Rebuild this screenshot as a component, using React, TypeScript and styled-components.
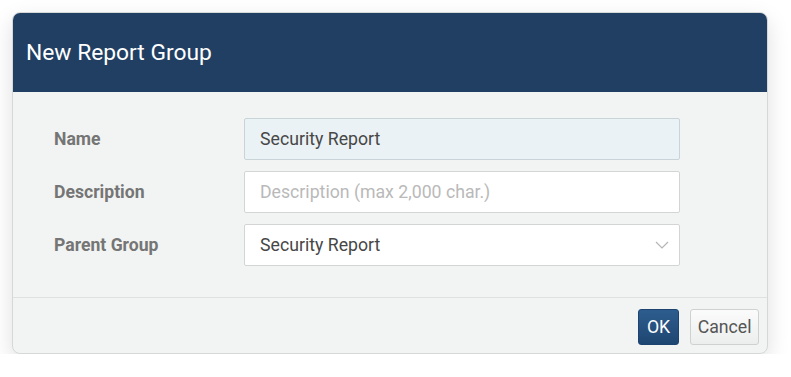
import React from 'react';
import styled, { createGlobalStyle } from 'styled-components';

const GlobalStyle = createGlobalStyle`
  html, body {
    margin: 0;
    padding: 0;
    background: #ffffff;
    font-family: Roboto, "Liberation Sans", Arial, sans-serif;
  }
`;

const Page = styled.div`
  padding: 12px 23px 0 12px;
`;

const Dialog = styled.div`
  width: 756px;
  border-radius: 8px;
  overflow: hidden;
  background: #f2f4f3;
  border: 1px solid #d6d8d8;
  box-sizing: border-box;
  box-shadow: 0 8px 22px rgba(0, 0, 0, 0.13);
`;

const Header = styled.div`
  height: 80px;
  background: #213f63;
  display: flex;
  align-items: center;
  padding: 0 14px;
  margin: -1px -1px 0;
`;

const Title = styled.h2`
  margin: 0;
  font-size: 22.8px;
  font-weight: 400;
  color: #ffffff;
`;

const Body = styled.div`
  padding: 26px 0 31px 41px;
  display: flex;
  flex-direction: column;
  gap: 11px;
  border-bottom: 1px solid #dfe1e1;
`;

const Row = styled.div`
  display: flex;
  align-items: center;
`;

const Label = styled.label`
  width: 190px;
  font-size: 17.6px;
  font-weight: 700;
  color: #757575;
`;

const Field = styled.div<{ $tinted?: boolean }>`
  width: 436px;
  height: 42px;
  box-sizing: border-box;
  border: 1px solid ${(p) => (p.$tinted ? '#c9d4d8' : '#d3d5d5')};
  border-radius: 2px;
  background: ${(p) => (p.$tinted ? '#eaf2f5' : '#ffffff')};
  display: flex;
  align-items: center;
  justify-content: space-between;
  padding: 0 10px 0 15px;
  font-size: 17.7px;
  color: #474747;
`;

const Placeholder = styled.span`
  color: #b9b9b9;
`;

const Chevron = styled.svg`
  width: 14px;
  height: 8px;
`;

const Footer = styled.div`
  display: flex;
  justify-content: flex-end;
  gap: 11px;
  padding: 11px 8px 8px 0;
`;

const Button = styled.button<{ $primary?: boolean }>`
  height: 36px;
  box-sizing: border-box;
  border-radius: 3px;
  font-family: inherit;
  font-size: 17.7px;
  padding: 0 ${(p) => (p.$primary ? '8px' : '6.5px')};
  border: 1px solid ${(p) => (p.$primary ? '#1d4470' : '#cfd1d1')};
  color: ${(p) => (p.$primary ? '#ffffff' : '#555555')};
  background: ${(p) =>
    p.$primary
      ? 'linear-gradient(#2d5d8e, #1f4672)'
      : 'linear-gradient(#fbfbfb, #eceeee)'};
  cursor: pointer;
`;

export default function App() {
  return (
    <>
      <GlobalStyle />
      <Page>
        <Dialog>
          <Header>
            <Title>New Report Group</Title>
          </Header>
          <Body>
            <Row>
              <Label>Name</Label>
              <Field $tinted>Security Report</Field>
            </Row>
            <Row>
              <Label>Description</Label>
              <Field>
                <Placeholder>Description (max 2,000 char.)</Placeholder>
              </Field>
            </Row>
            <Row>
              <Label>Parent Group</Label>
              <Field>
                Security Report
                <Chevron viewBox="0 0 14 8">
                  <path d="M1 1l6 6 6-6" fill="none" stroke="#b5b5b5" strokeWidth="1.2" />
                </Chevron>
              </Field>
            </Row>
          </Body>
          <Footer>
            <Button $primary>OK</Button>
            <Button>Cancel</Button>
          </Footer>
        </Dialog>
      </Page>
    </>
  );
}
